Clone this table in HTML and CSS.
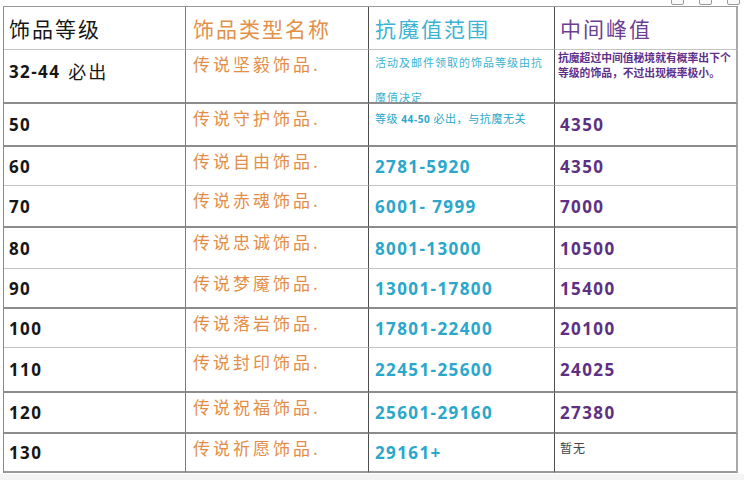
FILE: index.html
```html
<!DOCTYPE html>
<html lang="zh">
<head>
<meta charset="utf-8">
<title>饰品等级</title>
<link rel="stylesheet" href="styles.css">
</head>
<body>
<div class="sheet">
  <div class="grid">
    <div class="row r-light">
      <div class="c c1 mid"><span class="head k">饰品等级</span></div>
      <div class="c c2 mid"><span class="head o">饰品类型名称</span></div>
      <div class="c c3 mid"><span class="head cy">抗魔值范围</span></div>
      <div class="c c4 mid"><span class="head pu">中间峰值</span></div>
    </div>
    <div class="row r-dark">
      <div class="c c1 mid up"><span class="num k">32-44</span><span class="zh k">必出</span></div>
      <div class="c c2 top"><span class="name">传说坚毅饰品.</span></div>
      <div class="c c3 top"><p class="note cy wide">活动及邮件领取的饰品等级由抗<br>魔值决定</p></div>
      <div class="c c4 top tightcell"><p class="note pu tight">抗魔超过中间值秘境就有概率出下个<br>等级的饰品，不过出现概率极小。</p></div>
    </div>
    <div class="row r-dark">
      <div class="c c1 mid"><span class="num k">50</span></div>
      <div class="c c2 top"><span class="name">传说守护饰品.</span></div>
      <div class="c c3 top"><p class="note cy one">等级 <b>44-50</b> 必出，与抗魔无关</p></div>
      <div class="c c4 mid"><span class="num pu">4350</span></div>
    </div>
    <div class="row r-light">
      <div class="c c1 mid"><span class="num k">60</span></div>
      <div class="c c2 top"><span class="name">传说自由饰品.</span></div>
      <div class="c c3 mid"><span class="num cy">2781-5920</span></div>
      <div class="c c4 mid"><span class="num pu">4350</span></div>
    </div>
    <div class="row r-dark">
      <div class="c c1 mid"><span class="num k">70</span></div>
      <div class="c c2 top"><span class="name">传说赤魂饰品.</span></div>
      <div class="c c3 mid"><span class="num cy">6001- 7999</span></div>
      <div class="c c4 mid"><span class="num pu">7000</span></div>
    </div>
    <div class="row r-light">
      <div class="c c1 mid"><span class="num k">80</span></div>
      <div class="c c2 top"><span class="name">传说忠诚饰品.</span></div>
      <div class="c c3 mid"><span class="num cy">8001-13000</span></div>
      <div class="c c4 mid"><span class="num pu">10500</span></div>
    </div>
    <div class="row r-dark">
      <div class="c c1 mid"><span class="num k">90</span></div>
      <div class="c c2 top"><span class="name">传说梦魇饰品.</span></div>
      <div class="c c3 mid"><span class="num cy">13001-17800</span></div>
      <div class="c c4 mid"><span class="num pu">15400</span></div>
    </div>
    <div class="row r-light">
      <div class="c c1 mid"><span class="num k">100</span></div>
      <div class="c c2 top"><span class="name">传说落岩饰品.</span></div>
      <div class="c c3 mid"><span class="num cy">17801-22400</span></div>
      <div class="c c4 mid"><span class="num pu">20100</span></div>
    </div>
    <div class="row r-dark">
      <div class="c c1 mid"><span class="num k">110</span></div>
      <div class="c c2 top"><span class="name">传说封印饰品.</span></div>
      <div class="c c3 mid"><span class="num cy">22451-25600</span></div>
      <div class="c c4 mid"><span class="num pu">24025</span></div>
    </div>
    <div class="row r-dark">
      <div class="c c1 mid"><span class="num k">120</span></div>
      <div class="c c2 top"><span class="name">传说祝福饰品.</span></div>
      <div class="c c3 mid"><span class="num cy">25601-29160</span></div>
      <div class="c c4 mid"><span class="num pu">27380</span></div>
    </div>
    <div class="row r-last">
      <div class="c c1 mid"><span class="num k">130</span></div>
      <div class="c c2 top"><span class="name">传说祈愿饰品.</span></div>
      <div class="c c3 mid"><span class="num cy">29161+</span></div>
      <div class="c c4 top"><span class="none">暂无</span></div>
    </div>
  </div>
  <div class="foot"></div>
  <div class="winbtns"><span></span><span></span><span></span></div>
</div>
</body>
</html>
```

FILE: styles.css
```css
html, body {
  margin: 0;
  padding: 0;
  background: #ffffff;
}
body {
  width: 744px;
  height: 480px;
  overflow: hidden;
  font-family: "Noto Sans CJK SC", "Noto Sans", sans-serif;
}
.sheet {
  position: relative;
  padding-top: 6px;
  height: 480px;
  box-sizing: border-box;
  display: flex;
  flex-direction: column;
}
.grid {
  margin-left: 3px;
  width: 735px;
  box-sizing: border-box;
  display: grid;
  grid-template-columns: 182px 183px 186px 183px;
  grid-template-rows: 43px 54px 43px 39px 42px 41px 40px 39px 45px 41px 39px;
  border-left: 1px solid #8a8a8a;
  border-top: 1px solid #9a9a9a;
  background: #fff;
}
.row { display: contents; }
.c {
  box-sizing: border-box;
  border-right: 1px solid #666;
  border-bottom: 1px solid #bdbdbd;
  display: flex;
  padding-left: 5px;
  overflow: hidden;
}
.c1 { border-right-color: #7a7a7a; }
.c2 { border-right-color: #4e4e4e; padding-left: 7px; }
.c3 { border-right-color: #4e4e4e; padding-left: 6px; }
.c4 { border-right: 2px solid #a8a8a8; padding-left: 5px; }
.c4.tightcell { padding-left: 3px; }
.r-dark > .c { border-bottom: 2px solid #8c8c8c; }
.r-light > .c { border-bottom: 1px solid #c4c4c4; }
.r-last > .c { border-bottom: 2px solid #9a9a9a; }

.mid { align-items: center; }
.top { align-items: flex-start; }
.up { padding-bottom: 10px; }

.head {
  font-size: 21px;
  letter-spacing: 2px;
  font-weight: 400;
  line-height: 1;
}
.k { color: #161616; }
.o { color: #e39049; }
.cy { color: #2aa7cb; }
.pu { color: #64358a; }
.head.cy { color: #3ab4d2; }
.head.pu { color: #6d3f92; }

.num {
  font-family: "Open Sans", "Noto Sans", sans-serif;
  font-weight: 700;
  font-size: 17px;
  letter-spacing: 1.4px;
  line-height: 1;
}
.num.pu { color: #5d3082; }
.zh {
  font-size: 18px;
  letter-spacing: 2px;
  margin-left: 8px;
  line-height: 1;
}
.name {
  margin-top: 4px;
  font-size: 17px;
  letter-spacing: 3px;
  line-height: 20px;
  color: #e38e48;
}
.note {
  margin: 0;
  font-size: 11px;
  white-space: nowrap;
}
.note.wide {
  margin-top: -5px;
  letter-spacing: 1px;
  line-height: 35px;
  color: #3ab4d2;
}
.note.tight {
  margin-top: 0;
  font-weight: 700;
  font-size: 10.8px;
  letter-spacing: 0;
  line-height: 15px;
  color: #5f2f8a;
}
.note.one {
  margin-top: 7px;
  line-height: 14px;
  letter-spacing: 0.6px;
  font-size: 11px;
  color: #2aa7cb;
}
.note.one b {
  font-family: "Open Sans", sans-serif;
  font-weight: 700;
  font-size: 10px;
}
.none {
  margin-top: 5px;
  font-size: 12px;
  color: #444;
  letter-spacing: 1px;
}
.foot {
  flex: 1;
  background: #f4f4f4;
  margin-top: 1px;
}
.winbtns {
  position: absolute;
  top: -3px;
  left: 671px;
  display: flex;
  gap: 15px;
}
.winbtns span {
  width: 11px;
  height: 6px;
  border: 1px solid #9a9a9a;
  border-radius: 2px;
  background: #fafafa;
}
```
